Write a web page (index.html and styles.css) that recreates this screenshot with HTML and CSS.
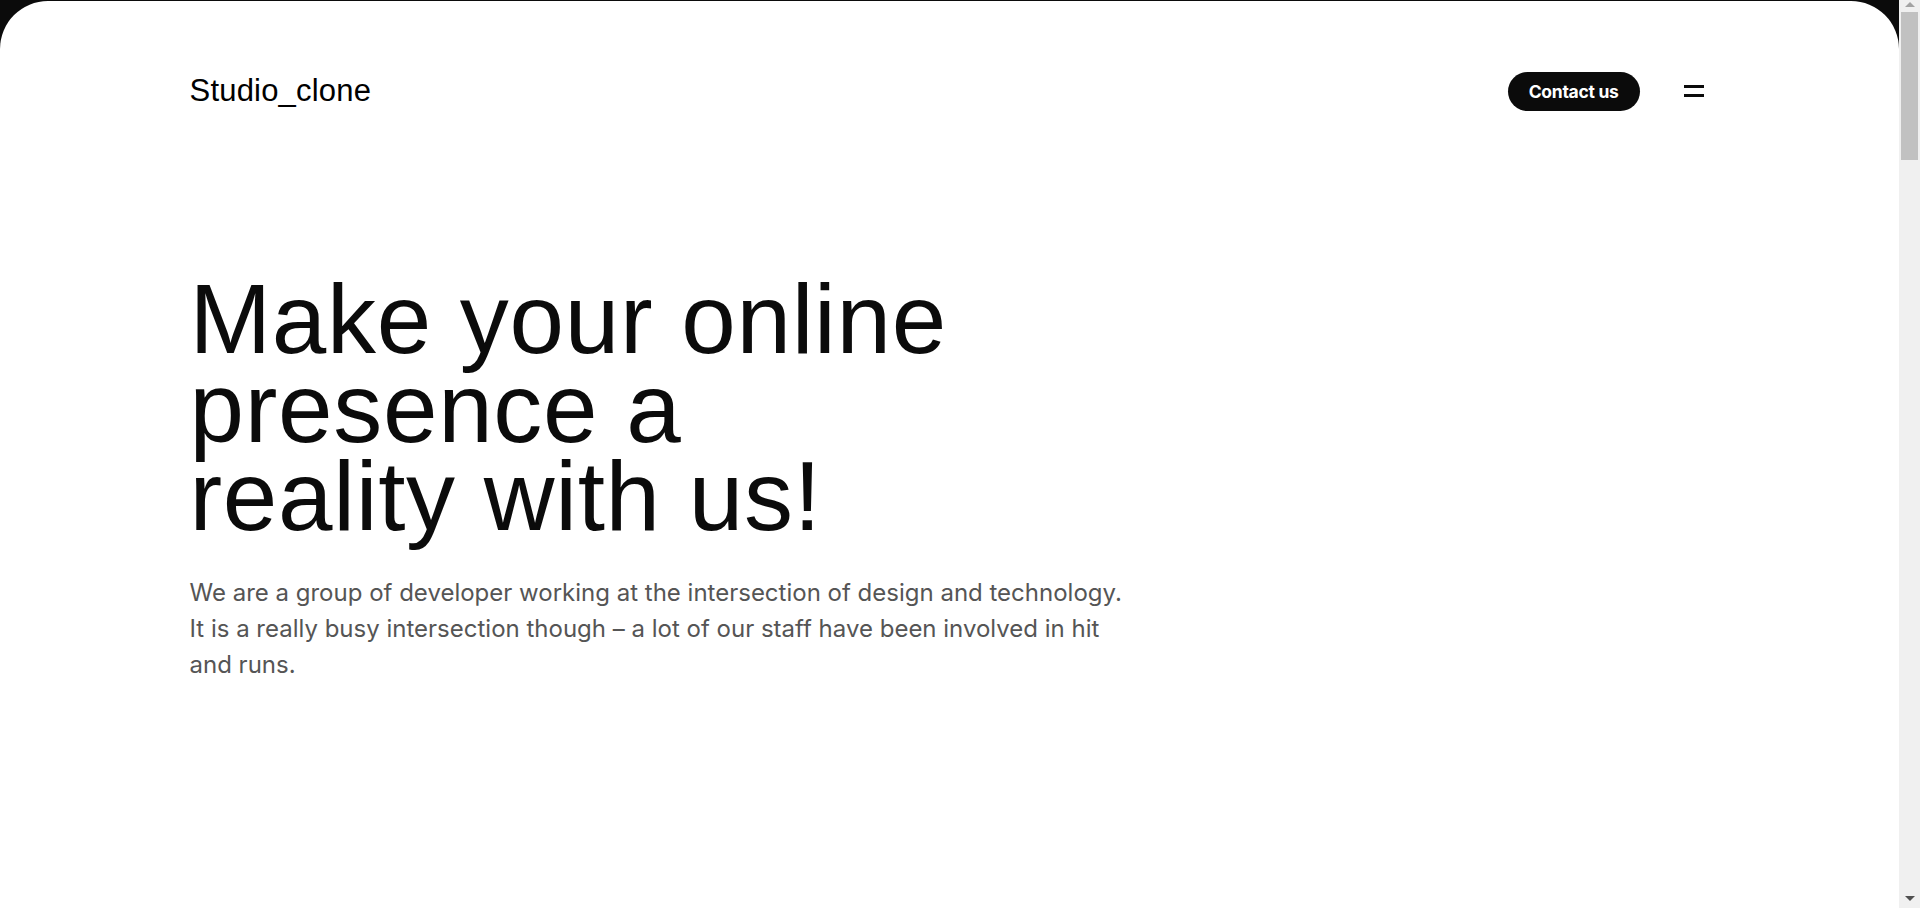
FILE: index.html
```html
<!DOCTYPE html>
<html lang="en">
<head>
<meta charset="utf-8">
<title>Studio_clone</title>
<link rel="stylesheet" href="styles.css">
</head>
<body>
<div class="page">
  <div class="container">
    <header class="site-header">
      <a class="logo" href="#">Studio_clone</a>
      <div class="header-actions">
        <a class="btn-contact" href="#">Contact us</a>
        <button class="menu-toggle" aria-label="Menu">
          <span class="bar"></span>
          <span class="bar"></span>
        </button>
      </div>
    </header>
    <section class="hero">
      <h1 class="hero-title">Make your online<br>presence a<br>reality with us!</h1>
      <p class="hero-text">We are a group of developer working at the intersection of design and technology. It is a really busy intersection though – a lot of our staff have been involved in hit and runs.</p>
    </section>
  </div>
</div>
<aside class="scrollbar" aria-hidden="true">
  <span class="sb-arrow sb-up"></span>
  <span class="sb-thumb"></span>
  <span class="sb-space"></span>
  <span class="sb-arrow sb-down"></span>
</aside>
</body>
</html>
```

FILE: styles.css
```css
* { box-sizing: border-box; }

html, body {
  margin: 0;
  padding: 0;
}

body {
  display: flex;
  align-items: flex-start;
  background: #0b0b0b;
  font-family: "Liberation Sans", Arial, sans-serif;
  color: #0b0b0b;
}

.page {
  flex: 1;
  margin-top: 1px;
  background: #ffffff;
  border-radius: 48px 48px 0 0;
  min-height: 1200px;
}

/* browser-style scrollbar column */
.scrollbar {
  position: sticky;
  top: 0;
  flex: none;
  width: 21px;
  height: 100vh;
  display: flex;
  flex-direction: column;
  align-items: center;
  background: #f0f0f0;
}

.sb-arrow {
  flex: none;
  width: 0;
  height: 0;
  border-left: 5px solid transparent;
  border-right: 5px solid transparent;
}

.sb-up {
  margin-top: 2px;
  margin-bottom: 5px;
  border-bottom: 5px solid #a3a3a3;
}

.sb-down {
  margin-top: 5px;
  margin-bottom: 7px;
  border-top: 5px solid #505050;
}

.sb-thumb {
  flex: none;
  width: 17px;
  height: 148px;
  background: #c1c1c1;
}

.sb-space {
  flex: 1;
}

.container {
  max-width: 1520px;
  margin: 0 auto;
}

.site-header {
  display: flex;
  align-items: center;
  justify-content: space-between;
  padding-top: 70px;
  height: 110px;
}

.logo {
  font-family: "Liberation Sans", Arial, sans-serif;
  font-size: 31px;
  letter-spacing: 0.2px;
  color: #000000;
  text-decoration: none;
}

.header-actions {
  display: flex;
  align-items: center;
  gap: 44px;
}

.btn-contact {
  display: inline-flex;
  align-items: center;
  height: 39px;
  padding: 0 21px;
  border-radius: 999px;
  background: #0b0b0b;
  color: #ffffff;
  font-family: Inter, "Liberation Sans", sans-serif;
  font-weight: 700;
  font-size: 17.5px;
  letter-spacing: -0.3px;
  text-decoration: none;
}

.menu-toggle {
  display: flex;
  flex-direction: column;
  align-items: flex-start;
  justify-content: center;
  gap: 6px;
  width: 26px;
  height: 26px;
  padding: 0;
  border: 0;
  background: transparent;
  cursor: pointer;
}

.bar {
  display: block;
  width: 20px;
  height: 3px;
  background: #0b0b0b;
}

.hero {
  padding-top: 164px;
}

.hero-title {
  margin: 0;
  font-family: "Liberation Sans", Arial, sans-serif;
  font-weight: 400;
  font-size: 98px;
  line-height: 88.5px;
  letter-spacing: 0.7px;
  color: #0b0b0b;
}

.hero-text {
  margin: 34px 0 0;
  max-width: 948px;
  font-family: Inter, "Liberation Sans", sans-serif;
  font-size: 24px;
  line-height: 36px;
  color: #555555;
}
```
